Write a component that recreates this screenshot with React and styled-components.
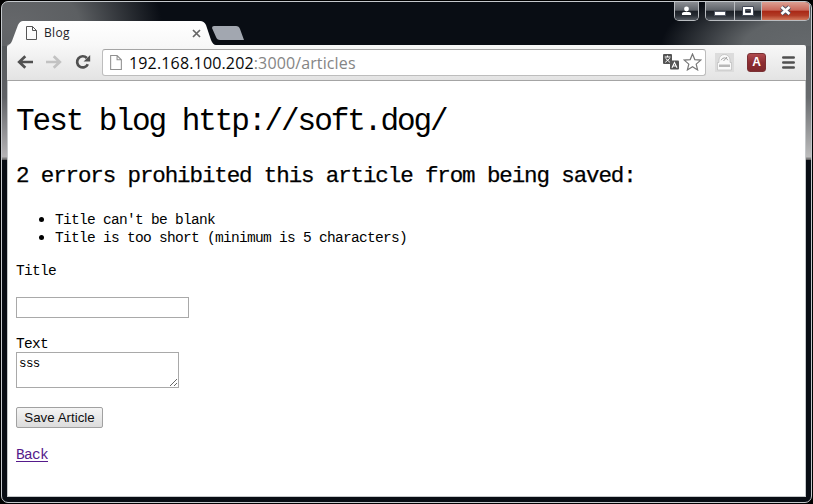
import React from "react";
import styled, { createGlobalStyle } from "styled-components";

const Global = createGlobalStyle`
  *, *::before, *::after { box-sizing: border-box; }
  html, body { margin: 0; padding: 0; background: #000; overflow: hidden; }
`;

const Desktop = styled.div`
  width: 813px;
  height: 504px;
  padding: 1px;
  background: #000;
`;
const Frame = styled.div`
  position: relative;
  width: 811px;
  height: 502px;
  border: 1px solid #c4c8cc;
  border-radius: 7px;
  padding: 19px 5px 5px 5px;
  display: flex;
  flex-direction: column;
  overflow: hidden;
  background:
    linear-gradient(#56595c, #606266 45%, #b5b3b5 97%, #555 100%) 0 44px / 6px 114px no-repeat,
    linear-gradient(#5c6063, #686b6e 45%, #bbb 97%, #555 100%) 100% 44px / 6px 114px no-repeat,
    radial-gradient(ellipse 150px 90px at 10px 22px, #65676a 0%, #5c5f62 45%, rgba(9, 13, 20, 0) 100%) 0 0 / 300px 44px no-repeat,
    radial-gradient(ellipse 150px 62px at 190px 44px, #65696c 0%, #5f6366 45%, rgba(9, 13, 20, 0) 100%) 100% 0 / 190px 44px no-repeat,
    #090d14;
`;
const TabStrip = styled.div`
  flex: none;
  display: flex;
  height: 24px;
`;
const Tab = styled.div`
  display: flex;
  align-items: center;
  width: 209px;
  height: 24px;
  padding: 0 15px 0 19px;
  background: linear-gradient(#fff, #f8f8f8);
  clip-path: path("M0 24 C3 24 4 22 5 20 L11 4 Q13 0 16 0 H193 Q197 0 199 4 L204 19 Q206 24 209 24 Z");
`;
const TabTitle = styled.span`
  flex: 1;
  margin-left: 7px;
  font: 12px/16px "Open Sans", "Noto Sans", sans-serif;
  letter-spacing: 0.35px;
  color: #1d2228;
`;
const NewTab = styled.div`
  width: 32px;
  height: 14px;
  margin: 5px 0 0 -4px;
  background: #a2a7b0;
  clip-path: path("M2 0 H24 Q27 0 28 3 L32 14 H8 Q5 14 4 11 L0 2 Q0 0 2 0 Z");
`;
const Toolbar = styled.div`
  flex: none;
  display: flex;
  align-items: center;
  height: 36px;
  padding: 0 9px 1px 10px;
  background: linear-gradient(#f8f8f8, #e3e3e3);
  border-bottom: 1px solid #a4a4a4;
  border-radius: 2px 2px 0 0;
`;
const Nav = styled.div`
  display: flex;
  gap: 13px;
  width: 85px;
`;
const Omnibox = styled.div`
  display: flex;
  align-items: center;
  width: 604px;
  height: 27px;
  padding: 0 3px 0 7px;
  background: #fff;
  border: 1px solid #bdbdbd;
  border-top-color: #a5a5a5;
  border-radius: 3px;
`;
const Address = styled.span`
  flex: 1;
  margin-left: 7px;
  padding-top: 1px;
  font: 16px/24px "Open Sans", "Noto Sans", sans-serif;
  letter-spacing: 0.12px;
  white-space: nowrap;
  color: #858585;
`;
const Host = styled.span`
  color: #080808;
  letter-spacing: 0.16px;
`;
const IconPair = styled.span`
  display: flex;
  align-items: center;
  gap: 4px;
`;
const Extensions = styled.div`
  display: flex;
  align-items: center;
  margin-left: 9px;
`;
const AdBadge = styled.span`
  width: 19px;
  height: 19px;
  margin: 0 16px 0 13px;
  border-radius: 3px;
  border: 1px solid #7a3034;
  background: linear-gradient(#b04a4e, #8d2d32 50%, #7f282c);
  color: #fff;
  text-align: center;
  font: bold 12px/17px "Liberation Sans", Arial, sans-serif;
`;
const Controls = styled.div`
  position: absolute;
  top: 0;
  right: 1px;
  display: flex;
`;
const Group = styled.div`
  display: flex;
  height: 19px;
  margin-left: 6px;
  border: 1px solid #b9bcc0;
  border-top: 0;
  border-radius: 0 0 5px 5px;
  overflow: hidden;
`;
const Control = styled.span`
  display: flex;
  align-items: center;
  justify-content: center;
  width: ${(p) => p.$w}px;
  padding-bottom: 1px;
  border-left: ${(p) => (p.$split ? "1px solid #b9bcc0" : "0")};
  background: ${(p) =>
    p.$close
      ? "linear-gradient(#dda093, #c9685a 46%, #a92715 50%, #b23c26 75%, #d2795c)"
      : "linear-gradient(#8b8e93, #5e6268 46%, #1a1e25 50%, #292e35 75%, #555a61)"};
`;
const Page = styled.main`
  flex: 1;
  padding: 22px 9px 0;
  background: #fff;
  border-right: 1px solid #c5c8ca;
  border-left: 1px solid #c5c8ca;
  border-bottom: 1px solid #c5c8ca;
  padding-left: 8px;
  color: #000;
  font: 14.5px/18px "Liberation Mono", "Courier New", monospace;
  letter-spacing: -0.7px;
`;
const Heading = styled.h1`
  margin: 0;
  font-size: 31px;
  line-height: 37px;
  font-weight: 400;
  letter-spacing: -2.04px;
  white-space: nowrap;
`;
const Subheading = styled.h2`
  margin: 22px 0 0;
  font-size: 22.5px;
  line-height: 28px;
  font-weight: 400;
  letter-spacing: -1.11px;
  -webkit-text-stroke: 0.25px #000;
  white-space: nowrap;
`;
const Errors = styled.ul`
  margin: 19px 0 0;
  padding-left: 39px;
`;
const ErrorItem = styled.li`
  height: 18px;
  line-height: 20px;
  &::marker { font-family: "Liberation Serif", serif; font-size: 16px; }
`;
const Form = styled.form`
  display: flex;
  flex-direction: column;
  align-items: flex-start;
  margin-top: 16px;
`;
const Label = styled.label`
  height: 18px;
  line-height: 20px;
  margin-top: ${(p) => p.$gap || 0}px;
`;
const Input = styled.input`
  width: 173px;
  height: 21px;
  margin-top: 18px;
  border: 1px solid #a9a9a9;
  background: #fff;
  outline: 0;
`;
const TextArea = styled.textarea`
  width: 163px;
  height: 36px;
  margin: 0;
  padding: 3px 2px 0;
  border: 1px solid #a9a9a9;
  color: #000;
  background: #fff;
  font: 12.5px/16px "Liberation Mono", "Courier New", monospace;
  letter-spacing: -0.6px;
  resize: both;
  overflow: hidden;
`;
const Save = styled.button`
  width: 87px;
  height: 21px;
  margin-top: 19px;
  padding: 0;
  border: 1px solid #a1a1a1;
  border-radius: 2px;
  background: linear-gradient(#f5f5f5, #dcdcdc);
  color: #111;
  white-space: nowrap;
  font: 13.33px/18px "Liberation Sans", Arial, sans-serif;
`;
const Back = styled.a`
  display: inline-block;
  margin-top: 17px;
  height: 18px;
  line-height: 20px;
  color: #551a8b;
  text-decoration: underline;
  text-underline-offset: 2px;
`;

const Sheet = ({ color, w = 11, h = 14 }) => (
  <svg width={w} height={h} viewBox="0 0 11 14" fill="none" stroke={color}>
    <path d="M.5.5h6l4 4v9H.5zM6.5.5v4h4" />
  </svg>
);
const Arrow = ({ color, flip }) => (
  <svg width="16" height="16" viewBox="0 0 16 16" fill="none" stroke={color} strokeWidth="2.7">
    <path d={flip ? "M0 8h13M7.7 2.2 13.8 8l-6.1 5.8" : "M16 8H3M8.3 2.2 2.2 8l6.1 5.8"} />
  </svg>
);
const Reload = () => (
  <svg width="16" height="16" viewBox="0 0 16 16">
    <path d="M12.8 10.2A5.6 5.6 0 1 1 11.8 4" fill="none" stroke="#505050" strokeWidth="2.7" />
    <path d="M15.2 1v6.5H8.6z" fill="#505050" />
  </svg>
);
const Translate = () => (
  <svg width="16" height="16" viewBox="0 0 16 16">
    <rect width="9" height="10" rx="1" fill="#545454" />
    <path d="M1.7 3h5.8M4.5 1.5V3M2.5 4.3l4.4 4M6.8 4.3l-4.5 4" fill="none" stroke="#fff" />
    <rect x="7" y="6.5" width="9" height="9" rx="1" fill="#545454" />
    <path d="m9 13.8 2.5-5.3 2.5 5.3M10 12h3" fill="none" stroke="#fff" strokeWidth="1.1" />
  </svg>
);
const Star = () => (
  <svg width="19" height="18" viewBox="0 0 19 18">
    <path d="M9.5 1 11.8 6.6l6 .5-4.6 4 1.4 5.8-5.1-3.2-5.1 3.2 1.4-5.8-4.6-4 6-.5z" fill="#fff" stroke="#777" strokeWidth="1.2" />
  </svg>
);
const Lock = () => (
  <svg width="19" height="19" viewBox="0 0 19 19">
    <rect width="19" height="19" fill="#dcdcdc" />
    <path d="M4 9.5V7a5.5 5.5 0 0 1 11 0v2.5h1.5V17h-14V9.5z" fill="#fafafa" stroke="#bbb" strokeWidth=".7" />
    <path d="M6.2 7.2a3.5 3.5 0 0 1 6.6 0M8.5 8l3.5-4" fill="none" stroke="#a0a0a0" />
    <path d="M4 11.5h11v2.5H4z" fill="#b8b8b8" />
  </svg>
);

export default function App() {
  return (
    <>
      <Global />
      <Desktop>
        <Frame>
          <Controls>
            <Group>
              <Control $w={23}>
                <svg width="11" height="10" viewBox="0 0 11 10">
                  <circle cx="5.5" cy="3" r="2.4" fill="#fff" />
                  <path d="M1 9V7.5Q1 6 3 6h5q2 0 2 1.5V9z" fill="#fff" />
                </svg>
              </Control>
            </Group>
            <Group>
              <Control $w={28}>
                <svg width="12" height="12" viewBox="0 0 12 12">
                  <rect x=".5" y="6.5" width="11" height="4" rx=".5" fill="#fff" stroke="#555b68" />
                </svg>
              </Control>
              <Control $w={27} $split>
                <svg width="12" height="10" viewBox="0 0 12 10">
                  <path d="M.5.5h11v9H.5zM3.5 3.5v3h5v-3z" fill="#fff" fillRule="evenodd" stroke="#454b58" />
                </svg>
              </Control>
              <Control $w={48} $split $close>
                <svg width="13" height="11" viewBox="0 0 13 11">
                  <path d="m2.5 2 8 7m0-7-8 7" stroke="#505363" strokeWidth="4.4" />
                  <path d="m2.5 2 8 7m0-7-8 7" stroke="#fff" strokeWidth="2.6" />
                </svg>
              </Control>
            </Group>
          </Controls>
          <TabStrip>
            <Tab>
              <Sheet color="#555" />
              <TabTitle>Blog</TabTitle>
              <svg width="9" height="9" viewBox="0 0 9 9">
                <path d="m1 1 7 7m0-7-7 7" stroke="#666" strokeWidth="1.7" />
              </svg>
            </Tab>
            <NewTab />
          </TabStrip>
          <Toolbar>
            <Nav>
              <Arrow color="#505050" />
              <Arrow color="#c2c2c2" flip />
              <Reload />
            </Nav>
            <Omnibox>
              <Sheet color="#909090" w={12} h={15} />
              <Address>
                <Host>192.168.100.202</Host>:3000/articles
              </Address>
              <IconPair>
                <Translate />
                <Star />
              </IconPair>
            </Omnibox>
            <Extensions>
              <Lock />
              <AdBadge>A</AdBadge>
              <svg width="13" height="13" viewBox="0 0 13 13">
                <path d="M1.3 1.5h10.4M1.3 6.5h10.4M1.3 11.5h10.4" stroke="#505050" strokeWidth="2.6" strokeLinecap="round" />
              </svg>
            </Extensions>
          </Toolbar>
          <Page>
            <Heading>Test blog http://soft.dog/</Heading>
            <Subheading>2 errors prohibited this article from being saved:</Subheading>
            <Errors>
              <ErrorItem>Title can't be blank</ErrorItem>
              <ErrorItem>Title is too short (minimum is 5 characters)</ErrorItem>
            </Errors>
            <Form onSubmit={(e) => e.preventDefault()}>
              <Label htmlFor="title">Title</Label>
              <Input id="title" />
              <Label htmlFor="text" $gap={16}>Text</Label>
              <TextArea id="text" defaultValue="sss" spellCheck={false} />
              <Save type="submit">Save Article</Save>
            </Form>
            <Back href="#">Back</Back>
          </Page>
        </Frame>
      </Desktop>
    </>
  );
}
